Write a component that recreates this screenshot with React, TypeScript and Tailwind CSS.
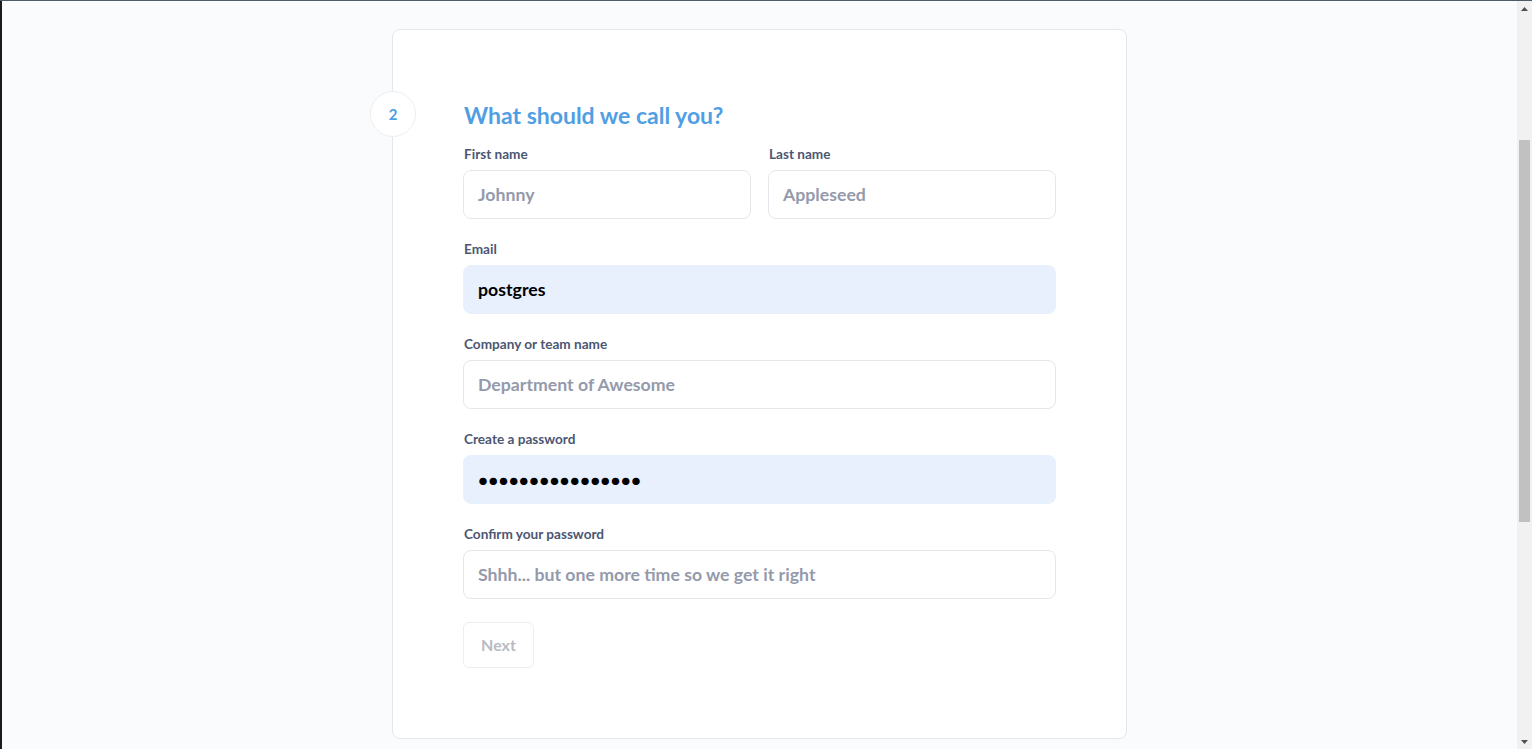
import React from "react";

function Dots() {
  return (
    <span className="flex items-center">
      {Array.from({ length: 16 }).map((_, i) => (
        <span key={i} className="w-[10.2px] text-center text-[15px] leading-none text-black">
          ●
        </span>
      ))}
    </span>
  );
}

function Field({ label, placeholder, value, filled, password }: { label: string; placeholder?: string; value?: string; filled?: boolean; password?: boolean }) {
  return (
    <div className="flex flex-col">
      <label className="pl-px text-[13.6px] leading-[18px] font-bold text-[#4c5773] mb-[7px]">{label}</label>
      <div
        className={
          "h-[49px] rounded-[8px] border flex items-center px-[14px] pt-[2px] text-[17.7px] font-bold " +
          (filled ? "bg-[#e8f0fe] border-[#e8f0fe] text-black" : "bg-white border-[#e4e7eb] text-[#949aab]")
        }
      >
        {filled ? (password ? <Dots /> : value) : placeholder}
      </div>
    </div>
  );
}

function Scrollbar() {
  return (
    <div className="w-[15px] h-full bg-[#f1f1f1] flex flex-col">
      <div className="h-[15px] flex items-center justify-center">
        <svg width="7" height="4" viewBox="0 0 7 4">
          <path d="M0 4 L3.5 0 L7 4 Z" fill="#505050" />
        </svg>
      </div>
      <div className="flex-1 px-[2px]">
        <div className="mt-[124px] h-[382px] bg-[#c1c1c1]" />
      </div>
      <div className="h-[15px] flex items-center justify-center">
        <svg width="7" height="4" viewBox="0 0 7 4">
          <path d="M0 0 L3.5 4 L7 0 Z" fill="#505050" />
        </svg>
      </div>
    </div>
  );
}

export default function App() {
  return (
    <div className="h-[749px] w-full flex flex-col overflow-hidden font-['Lato','Noto_Sans',sans-serif]">
      <div className="h-px bg-[#4f5b66] shrink-0" />
      <div className="flex-1 flex min-h-0">
        <div className="w-[2px] bg-[#1b1b1b] shrink-0" />
        <main className="flex-1 bg-[#f9fbfc] overflow-hidden pt-[28px]">
          <div className="w-[735px] mx-auto relative bg-white border border-[#e4e7eb] rounded-[8px] pt-[69px] pb-[70px] px-[70px]">
            <div className="absolute left-[-23px] top-[61px] w-[46px] h-[46px] rounded-full bg-white border border-[#eceef1] flex items-center justify-center text-[15px] font-bold text-[#509ee3]">
              2
            </div>
            <h3 className="pl-px text-[23px] leading-[32px] font-bold text-[#509ee3] mb-[14px]">What should we call you?</h3>
            <div className="flex flex-col gap-[21px]">
              <div className="grid grid-cols-2 gap-x-[17px]">
                <Field label="First name" placeholder="Johnny" />
                <Field label="Last name" placeholder="Appleseed" />
              </div>
              <Field label="Email" value="postgres" filled />
              <Field label="Company or team name" placeholder="Department of Awesome" />
              <Field label="Create a password" filled password />
              <Field label="Confirm your password" placeholder="Shhh... but one more time so we get it right" />
            </div>
            <button className="mt-[23px] w-[71px] h-[46px] rounded-[6px] border border-[#eceef1] bg-white text-[16px] font-bold text-[#b8bbc3]">
              Next
            </button>
          </div>
        </main>
        <Scrollbar />
      </div>
    </div>
  );
}
